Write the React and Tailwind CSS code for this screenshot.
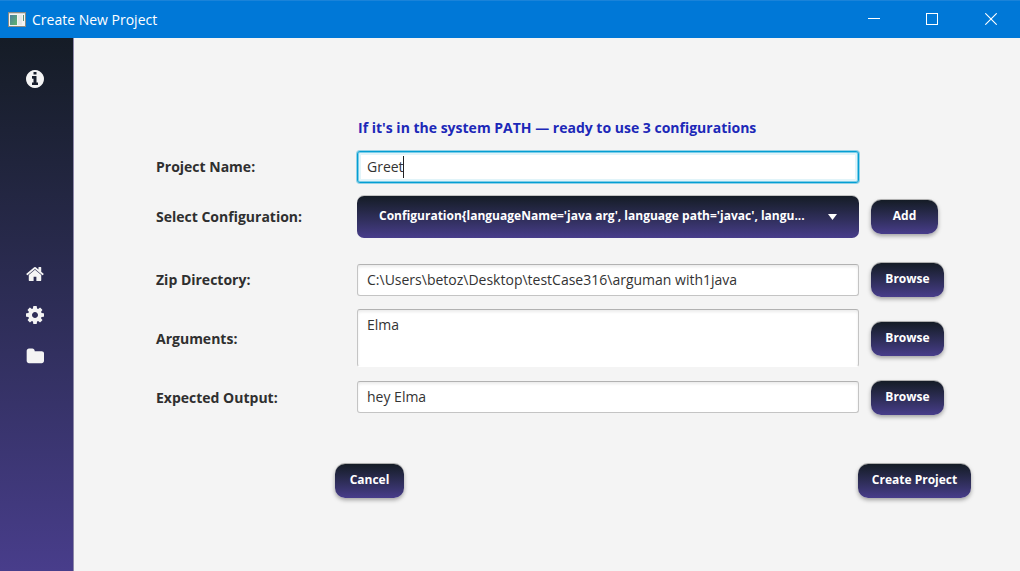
const ICONS = {
  info: {
    viewBox: "128 128 1536 1536",
    d: "M1152 1376v-160q0-14-9-23t-23-9h-96v-512q0-14-9-23t-23-9h-320q-14 0-23 9t-9 23v160q0 14 9 23t23 9h96v320h-96q-14 0-23 9t-9 23v160q0 14 9 23t23 9h448q14 0 23-9t9-23zm-128-896v-160q0-14-9-23t-23-9h-192q-14 0-23 9t-9 23v160q0 14 9 23t23 9h192q14 0 23-9t9-23zm640 416q0 209-103 385.5t-279.5 279.5-385.5 103-385.5-103-279.5-279.5-103-385.5 103-385.5 279.5-279.5 385.5-103 385.5 103 279.5 279.5 103 385.5z",
  },
  home: {
    viewBox: "64 64 1664 1664",
    d: "M1472 992v480q0 26-19 45t-45 19h-384v-384h-256v384h-384q-26 0-45-19t-19-45v-480q0-1 .5-3t.5-3l575-474 575 474q1 2 1 6zm223-69l-62 74q-8 9-21 11h-3q-13 0-21-7l-692-577-692 577q-12 8-24 7-13-2-21-11l-62-74q-8-10-7-23.5t11-21.5l719-599q32-26 76-26t76 26l244 204v-195q0-14 9-23t23-9h192q14 0 23 9t9 23v408l219 182q10 8 11 21.5t-7 23.5z",
  },
  cog: {
    viewBox: "128 128 1536 1536",
    d: "M1152 896q0-106-75-181t-181-75-181 75-75 181 75 181 181 75 181-75 75-181zm512-109v222q0 12-8 23t-20 13l-185 28q-19 54-39 91 35 50 107 138 10 12 10 25t-9 23q-27 37-99 108t-94 71q-12 0-26-9l-138-108q-44 23-91 38-16 136-29 186-7 28-36 28h-222q-14 0-24.5-8.5t-11.5-21.5l-28-184q-49-16-90-37l-141 107q-10 9-25 9-14 0-25-11-126-114-165-168-7-10-7-23 0-12 8-23 15-21 51-66.5t54-70.5q-27-50-41-99l-183-27q-13-2-21-12.5t-8-23.5v-222q0-12 8-23t19-13l186-28q14-46 39-92-40-57-107-138-10-12-10-24 0-10 9-23 26-36 98.5-107.5t94.5-71.5q13 0 26 10l138 107q44-23 91-38 16-136 29-186 7-28 36-28h222q14 0 24.5 8.5t11.5 21.5l28 184q49 16 90 37l142-107q9-9 24-9 13 0 25 10 129 119 165 170 7 8 7 22 0 12-8 23-15 21-51 66.5t-54 70.5q26 50 41 98l183 28q13 2 21 12.5t8 23.5z",
  },
  folder: {
    viewBox: "0 -16 1728 1728",
    d: "M1728 608v704q0 92-66 158t-158 66h-1216q-92 0-158-66t-66-158v-960q0-92 66-158t158-66h320q92 0 158 66t66 158v32h672q92 0 158 66t66 158z",
  },
};

function NavButton({ icon, label }) {
  return (
    <button
      type="button"
      aria-label={label}
      className="flex h-[41px] w-full items-center justify-center pr-[3px] text-[#f4f4f4]"
    >
      <svg viewBox={ICONS[icon].viewBox} className="size-[18px]" fill="currentColor">
        <path d={ICONS[icon].d} />
      </svg>
    </button>
  );
}

function Sidebar() {
  return (
    <nav className="flex w-[74px] shrink-0 flex-col border-r border-[#8d88a8] bg-linear-to-b from-[#151c26] to-[#483d8b] pt-5">
      <NavButton icon="info" label="Info" />
      <div className="mt-[154px] flex flex-col">
        <NavButton icon="home" label="Home" />
        <NavButton icon="cog" label="Settings" />
        <NavButton icon="folder" label="Projects" />
      </div>
    </nav>
  );
}

function TitleBar() {
  return (
    <header className="flex h-[38px] shrink-0 items-center border-t border-[#1a83d9] bg-[#0078d7] pl-2 text-white">
      <svg viewBox="0 0 18 15" className="mr-1.5 h-[15px] w-[18px]" shapeRendering="crispEdges">
        <defs>
          <linearGradient id="thumb" x1="0" y1="0" x2="1" y2="1">
            <stop offset="0" stopColor="#4a7fa0" />
            <stop offset="1" stopColor="#5fb56c" />
          </linearGradient>
        </defs>
        <rect width="18" height="15" fill="#8b8b84" />
        <rect x="1" y="1" width="16" height="13" fill="#f4f4f2" />
        <rect x="1" y="1" width="16" height="1" fill="#d4d4d0" />
        <rect x="2" y="3" width="7" height="10" fill="url(#thumb)" />
        <rect x="10" y="3" width="4" height="10" fill="#e6e9e9" />
        <rect x="15" y="3" width="1" height="6" fill="#5d9577" />
      </svg>
      <h1 className="text-sm leading-5">Create New Project</h1>
      <div className="ml-auto flex h-full pb-px">
        <button type="button" aria-label="Minimize" className="flex w-[58px] items-center justify-center">
          <svg viewBox="0 0 12 12" className="size-3" shapeRendering="crispEdges">
            <rect y="5" width="12" height="1" fill="currentColor" />
          </svg>
        </button>
        <button type="button" aria-label="Maximize" className="flex w-[58px] items-center justify-center">
          <svg viewBox="0 0 12 12" className="size-3" fill="none" stroke="currentColor">
            <rect x="0.5" y="0.5" width="11" height="11" />
          </svg>
        </button>
        <button type="button" aria-label="Close" className="flex w-[59px] items-center justify-center">
          <svg viewBox="0 0 12 12" className="size-3" fill="none" stroke="currentColor" strokeWidth="1.1">
            <path d="M0.3 0.3L11.7 11.7M11.7 0.3L0.3 11.7" />
          </svg>
        </button>
      </div>
    </header>
  );
}

function ActionButton({ children, className }) {
  return (
    <button
      type="button"
      className={
        "h-[34px] rounded-[10px] bg-linear-to-b from-[#151c26] to-[#483d8b] pb-[3px] text-xs leading-5 font-bold text-white shadow-[0_2px_4px_rgba(0,0,0,0.35),0_-1px_0_rgba(0,0,0,0.25)] " +
        className
      }
    >
      {children}
    </button>
  );
}

function Row({ id, label, action, actionClass, className = "", fieldClass = "", children }) {
  return (
    <div className={"grid grid-cols-[201px_minmax(0,1fr)_161px] items-center " + className}>
      <label htmlFor={id} className="text-sm leading-5 font-bold text-[#2f2f2f]">
        {label}
      </label>
      <div className={"relative flex " + fieldClass}>{children}</div>
      <div className="flex pl-3">
        {action && <ActionButton className={actionClass}>{action}</ActionButton>}
      </div>
    </div>
  );
}

const FIELD =
  "w-full border border-[#c4c4c4] border-t-[#b2b2b2] bg-white px-[9px] text-sm leading-5 text-[#333333] shadow-[inset_0_2px_3px_rgba(0,0,0,0.08)] outline-none";

export default function App() {
  return (
    <div className="flex min-h-screen flex-col bg-[#f4f4f4] font-['Open_Sans','Noto_Sans',sans-serif]">
      <TitleBar />
      <div className="flex flex-1">
        <Sidebar />
        <main className="min-w-0 flex-1 pt-20 pl-[82px]">
          <form onSubmit={(e) => e.preventDefault()}>
            <p className="pl-[202px] text-sm leading-5 font-bold text-[#1c28b8]">
              If it's in the system PATH — ready to use 3 configurations
            </p>
            <div className="mt-3 flex flex-col gap-3">
              <Row id="name" label="Project Name:" className="h-[34px]">
                <input
                  id="name"
                  type="text"
                  defaultValue="Greet"
                  className="h-8 w-full rounded-[3px] border border-[#039ed3] bg-white px-[9px] pb-0.5 text-sm leading-5 text-[#333333] shadow-[0_0_0_1px_rgba(3,158,211,0.4),inset_0_0_0_1px_rgba(3,158,211,0.45),inset_0_0_0_3px_#e1f4f9] outline-none"
                />
                <span className="pointer-events-none absolute top-[5px] left-[46px] h-[22px] w-px bg-[#222222]" />
              </Row>
              <Row id="config" label="Select Configuration:" action="Add" actionClass="w-[67px]" className="h-[42px]">
                <select
                  id="config"
                  className="h-[42px] w-full appearance-none rounded-[7px] bg-linear-to-b from-[#151c26] to-[#483d8b] pr-12 pb-[3px] pl-[22px] text-xs leading-5 font-bold text-white shadow-[0_-1px_0_rgba(0,0,0,0.2)] outline-none"
                >
                  <option>Configuration{"{"}languageName='java arg', language path='javac', langu...</option>
                </select>
                <svg viewBox="0 0 9 6" className="pointer-events-none absolute top-[18px] right-[22px] h-1.5 w-[9px]" fill="#ffffff">
                  <path d="M0 0h9L4.5 6z" />
                </svg>
              </Row>
              <Row id="zip" label="Zip Directory:" action="Browse" actionClass="w-[73px]" className="pt-[13px]">
                <input
                  id="zip"
                  type="text"
                  defaultValue={"C:\\Users\\betoz\\Desktop\\testCase316\\arguman with1java"}
                  className={FIELD + " h-8 rounded-[3px] pb-0.5"}
                />
              </Row>
              <Row
                id="args"
                label="Arguments:"
                action="Browse"
                actionClass="w-[73px]"
                className="h-[60px]"
                fieldClass="self-start"
              >
                <textarea
                  id="args"
                  defaultValue="Elma"
                  className={FIELD + " h-[58px] resize-none rounded-[3px] border-b-white pt-[5px]"}
                />
              </Row>
              <Row
                id="output"
                label="Expected Output:"
                action="Browse"
                actionClass="w-[73px]"
                fieldClass="self-start"
              >
                <input id="output" type="text" defaultValue="hey Elma" className={FIELD + " h-8 rounded-[3px] pb-0.5"} />
              </Row>
            </div>
            <div className="mt-[49px] flex justify-between pr-[49px] pb-6 pl-[179px]">
              <ActionButton className="w-[69px]">Cancel</ActionButton>
              <ActionButton className="w-[113px]">Create Project</ActionButton>
            </div>
          </form>
        </main>
      </div>
    </div>
  );
}
